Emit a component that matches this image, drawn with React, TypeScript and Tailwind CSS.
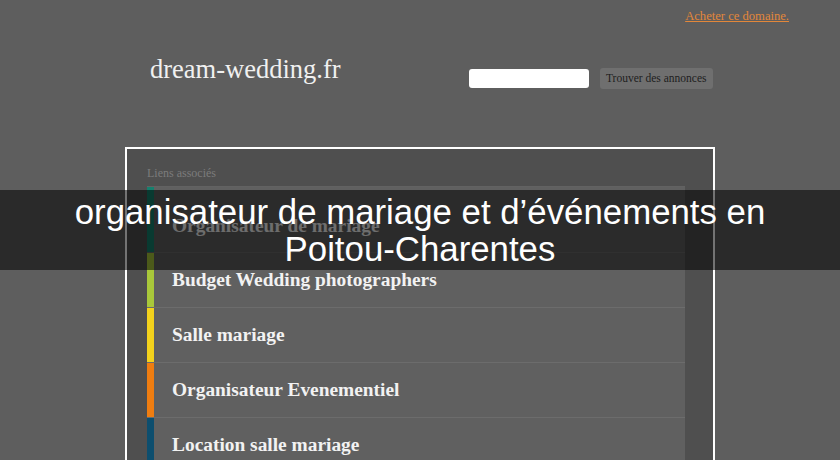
const links = [
  { label: "Organisateur de mariage", bar: "bg-[#15806e]", first: true },
  { label: "Budget Wedding photographers", bar: "bg-[#a9c83a]" },
  { label: "Salle mariage", bar: "bg-[#f3d21c]" },
  { label: "Organisateur Evenementiel", bar: "bg-[#ef7d10]" },
  { label: "Location salle mariage", bar: "bg-[#0d4e6e]" },
];

export default function App() {
  return (
    <div className="relative w-[840px] h-[460px] overflow-hidden bg-[#5e5e5e] font-['Liberation_Serif',serif]">
      {/* top link */}
      <div className="flex justify-end pt-[8px] pr-[51px]">
        <a href="#" className="text-[12.6px] leading-[16px] text-[#e3873a] underline">
          Acheter ce domaine.
        </a>
      </div>

      {/* header */}
      <div className="flex items-start mt-[30px]">
        <div className="ml-[150px] w-[319px] text-[26.5px] leading-[30px] text-[#f0f0f0]">
          dream-wedding.fr
        </div>
        <div className="flex items-center mt-[14px]">
          <input className="w-[120px] h-[19px] rounded-[3px] bg-white outline-none" />
          <button className="ml-[11px] h-[21px] px-[6px] rounded-[3px] bg-[#6f6f6f] text-[11.5px] text-[#1e1e1e]">
            Trouver des annonces
          </button>
        </div>
      </div>

      {/* related links box */}
      <div className="ml-[125px] mt-[58px] w-[590px] border-2 border-white bg-[#4f4f4f] pl-[20px] pr-[28px] pt-[16px] h-[400px]">
        <div className="text-[12px] leading-[16px] text-[#7c7c7c] pb-[5px] border-b border-[#626262]">
          Liens associés
        </div>
        <div className="flex flex-col">
          {links.map((l) => (
            <div
              key={l.label}
              className={`flex ${l.first ? "h-[66px]" : "h-[55px]"} border-b border-[#6c6c6c]`}
            >
              <div className={`w-[7px] shrink-0 ${l.bar}`} />
              <div
                className={`flex-1 flex items-center bg-[#606060] pl-[18px] text-[19.4px] font-bold text-[#f2f2f2] ${
                  l.first ? "pt-[12px]" : ""
                }`}
              >
                {l.label}
              </div>
            </div>
          ))}
        </div>
      </div>

      {/* title overlay */}
      <div className="absolute left-0 top-[190px] w-full h-[80px] bg-black/55 flex items-center justify-center">
        <div className="text-center text-white text-[34.8px] leading-[37px] font-['Liberation_Sans',sans-serif]">
          organisateur de mariage et d’événements en
          <br />
          Poitou-Charentes
        </div>
      </div>
    </div>
  );
}
